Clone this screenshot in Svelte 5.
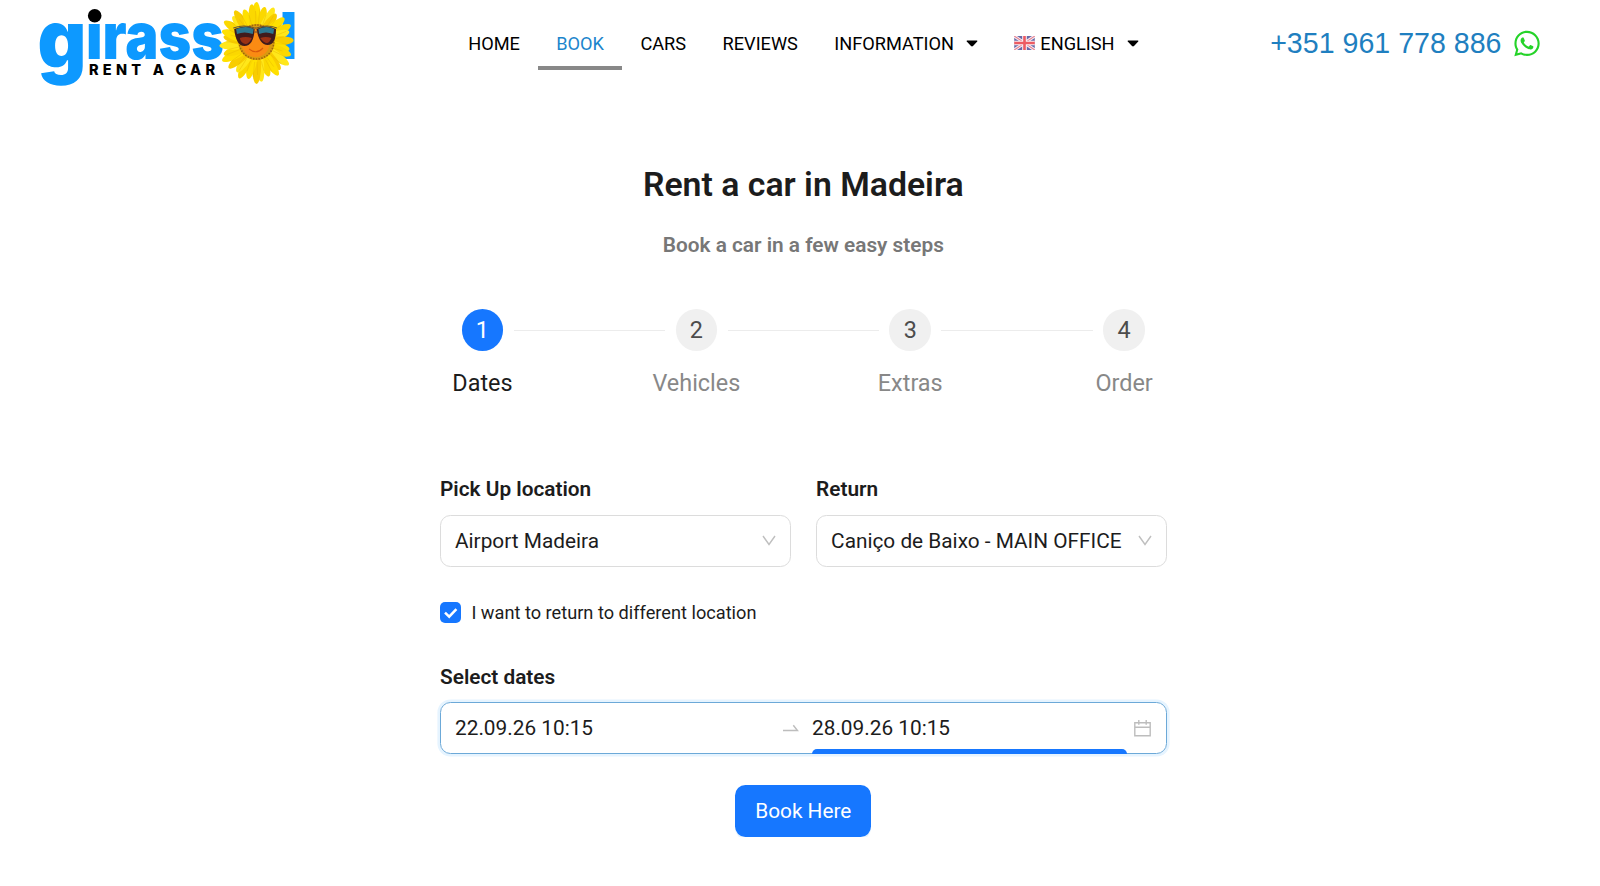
<script lang="ts">
  const links = ['HOME', 'BOOK', 'CARS', 'REVIEWS'];
  const steps = ['Dates', 'Vehicles', 'Extras', 'Order'];

  let currentStep = $state(0);
  let differentLocation = $state(true);

  const petals = Array.from({ length: 30 }, (_, i) => ({
    angle: i * 12 + (i % 3) * 2,
    length: [39, 35, 38, 34, 37][i % 5],
    fill: ['#ffe000', '#fbd800', '#ffe71a', '#f8cd00'][i % 4]
  }));
</script>

{#snippet caret()}
  <svg class="caret" viewBox="0 0 12 7"><path d="M1 .5h10q.8.3.2 1L7 6q-1 .8-2 0L.8 1.5Q.2.8 1 .5Z" /></svg>
{/snippet}

{#snippet chevron()}
  <svg class="chevron" viewBox="0 0 14 11"><path d="M1 1l6 8.5L13 1" /></svg>
{/snippet}

<header>
  <a class="logo" href="#home" aria-label="Girassol rent a car">
    <svg width="270" height="90" viewBox="0 0 270 90">
      <text class="brand" transform="translate(0 67.5) scale(1 1.25)" x="-.5" y="0" textLength="49" lengthAdjust="spacingAndGlyphs">g</text>
      <text class="brand" x="48" y="59" textLength="138" lengthAdjust="spacingAndGlyphs">irass</text>
      <text class="brand" x="241.5" y="59" textLength="18" lengthAdjust="spacingAndGlyphs">l</text>
      <rect x="48" y="6" width="17" height="16.5" fill="#fff" />
      <circle cx="56.7" cy="15.8" r="6.8" />
      <text class="tagline" x="51" y="75" textLength="126">RENT A CAR</text>
      <g transform="translate(218.5 43) scale(.93 1)">
        {#each petals as petal}
          <ellipse cx="0" cy={-petal.length / 2 - 2} rx="5" ry={petal.length / 2} fill={petal.fill} transform="rotate({petal.angle})" />
        {/each}
        {#each petals as petal}
          <path d="M0 -19V{5 - petal.length}" stroke="#e5b500" stroke-width=".4" transform="rotate({petal.angle + 6})" />
        {/each}
        <ellipse cy="-1" rx="19.5" ry="18" fill="#d99a10" />
        <ellipse cy="-1" rx="18.5" ry="17" fill="none" stroke="#9b670b" stroke-width="1.6" stroke-dasharray="1.5 1.5" />
        <ellipse cx="-1" cy="0" rx="15" ry="14" fill="#fa8b13" />
        <path d="M-8 6q8 6 15-1" fill="none" stroke="#d9590b" stroke-width="1.1" />
        <path d="M-24-14q13-5 22 0-1 17-11 17-9 0-11-17ZM0-14q11-5 21 0 0 16-9 16T0-14Z" fill="#401b1c" />
        <path d="M-22-14q11-4 19 0l-1 5q-9-3-17 0ZM2-14q9-4 17 0l-1 5q-8-3-15 0Z" fill="#2c7890" />
        <path d="M-18-5q6-2 13 0-3 6-7 6-5-1-6-6ZM4-5q6-2 12 0-2 5-5 5T4-5Z" fill="#9b3114" />
        <path d="M-25-15q12-4 23 0h2q11-4 22 0M-2-11h4" fill="none" stroke="#5a4a3a" stroke-width="1" />
      </g>
    </svg>
  </a>

  <nav>
    {#each links as link}
      <a class:active={link === 'BOOK'} href="#{link.toLowerCase()}">{link}</a>
    {/each}
    <a href="#information">INFORMATION {@render caret()}</a>
    <a href="#language">
      <svg class="flag" viewBox="0 0 22 15">
        <rect width="22" height="15" fill="#6768a6" />
        <path d="M0 0l22 15M22 0L0 15" stroke="#f5eef6" stroke-width="3.4" />
        <path d="M0 0l22 15M22 0L0 15" stroke="#e87f8b" stroke-width="1.1" />
        <path d="M11 0v15M0 7.5h22" stroke="#f9eff4" stroke-width="5" />
        <path d="M11 0v15M0 7.5h22" stroke="#ed5b62" stroke-width="2.8" />
      </svg>
      ENGLISH {@render caret()}
    </a>
  </nav>

  <a class="phone" href="tel:+351961778886">
    +351 961 778 886
    <svg class="whatsapp" viewBox="0 0 448 512">
      <path d="M380.9 97.1C339 55.1 283.2 32 223.9 32c-122.4 0-222 99.6-222 222 0 39.1 10.2 77.3 29.6 111L0 480l117.7-30.9c32.4 17.7 68.9 27 106.1 27h.1c122.3 0 224.1-99.6 224.1-222 0-59.3-25.2-115-67.1-157zm-157 341.6c-33.2 0-65.7-8.9-94-25.7l-6.700-4-69.800 18.3L72 359.2l-4.400-7c-18.500-29.400-28.200-63.300-28.200-98.200 0-101.700 82.800-184.500 184.600-184.500 49.300 0 95.600 19.200 130.400 54.100 34.800 34.900 56.200 81.200 56.100 130.500 0 101.800-84.900 184.600-186.600 184.600zm101.200-138.200c-5.500-2.800-32.800-16.200-37.900-18-5.100-1.900-8.800-2.800-12.500 2.800-3.700 5.600-14.300 18-17.600 21.800-3.200 3.700-6.500 4.200-12 1.400-32.600-16.300-54-29.100-75.500-66-5.700-9.800 5.700-9.100 16.300-30.300 1.800-3.700.9-6.900-.5-9.700-1.400-2.800-12.500-30.100-17.100-41.200-4.500-10.800-9.100-9.300-12.500-9.500-3.200-.2-6.900-.2-10.600-.2-3.700 0-9.700 1.400-14.800 6.900-5.100 5.600-19.400 19-19.400 46.300 0 27.300 19.900 53.700 22.600 57.400 2.800 3.700 39.100 59.700 94.800 83.800 35.200 15.200 49 16.500 66.600 13.900 10.700-1.600 32.800-13.400 37.400-26.400 4.600-13 4.600-24.100 3.200-26.400-1.300-2.500-5-3.900-10.500-6.600z" />
    </svg>
  </a>
</header>

<main>
  <h1>Rent a car in Madeira</h1>
  <h2>Book a car in a few easy steps</h2>

  <ol class="steps">
    {#each steps as step, i}
      <li class:current={i === currentStep}>
        <button type="button" onclick={() => (currentStep = i)}>{i + 1}</button>
        <span>{step}</span>
      </li>
    {/each}
  </ol>

  <div class="locations">
    <div class="field">
      <div class="label">Pick Up location</div>
      <div class="select">Airport Madeira {@render chevron()}</div>
    </div>
    <div class="field">
      <div class="label">Return</div>
      <div class="select">Caniço de Baixo - MAIN OFFICE {@render chevron()}</div>
    </div>
  </div>

  <label class="different">
    <input type="checkbox" bind:checked={differentLocation} />
    <span class="box">
      {#if differentLocation}
        <svg viewBox="0 0 21 21"><path d="M5 10.6l4.2 4.1 7.2-7.6" /></svg>
      {/if}
    </span>
    I want to return to different location
  </label>

  <div class="label">Select dates</div>
  <div class="picker">
    <span class="from">22.09.26 10:15</span>
    <svg class="arrow" viewBox="0 0 16 8"><path d="M0 6.5h14.5L10.3 1.2" /></svg>
    <span class="to">28.09.26 10:15</span>
    <svg class="calendar" viewBox="0 0 17 17"><path d="M.8 2.8h15.4v12.9H.8ZM.8 7.3h15.4M4.8 0v4.7M12.2 0v4.7" /></svg>
  </div>

  <button class="book" type="button">Book Here</button>
</main>

<style>
  :global(body) {
    background: #fff;
    color: #1c1c1c;
    font-family: Roboto, 'Liberation Sans', sans-serif;
  }

  a {
    color: inherit;
    text-decoration: none;
  }

  header {
    display: grid;
    grid-template-columns: 412px auto 1fr;
    height: 90px;
    padding: 0 60px 0 38px;
  }

  .logo svg {
    display: block;
    overflow: visible;
  }

  .brand {
    font: 900 65px Inter, sans-serif;
    fill: #0d99ff;
  }

  .tagline {
    font: 800 14.5px Inter, sans-serif;
    fill: #000;
  }

  nav {
    display: flex;
    height: 70px;
    color: #000;
    font-size: 18.2px;
  }

  nav a {
    display: flex;
    align-items: center;
    box-sizing: border-box;
    padding: 20.5px 18.2px 0;
    border-bottom: 4px solid transparent;
  }

  nav .active {
    color: #1c85cc;
    border-bottom-color: #888;
  }

  .caret {
    width: 12px;
    height: 7px;
    margin-left: 12px;
  }

  .flag {
    width: 21px;
    height: 14px;
    margin-right: 5px;
  }

  .phone {
    display: flex;
    justify-content: flex-end;
    align-items: center;
    height: 87px;
    color: #1f7fc0;
    font: 28.6px 'Liberation Sans', Arial, sans-serif;
  }

  .whatsapp {
    width: 26px;
    height: 29px;
    margin-left: 12.5px;
    fill: #25d329;
  }

  main {
    width: 726.6px;
    margin: 0 auto;
    padding-left: 6.6px;
  }

  h1 {
    margin: 74px 0 0;
    font-size: 33.8px;
    font-weight: 600;
    line-height: 42px;
    text-align: center;
  }

  h2 {
    margin: 26px 0 0;
    color: #777;
    font-size: 20.8px;
    font-weight: 600;
    line-height: 26px;
    text-align: center;
  }

  .steps {
    display: grid;
    grid-template-columns: repeat(4, 1fr);
    margin: 51px -64.5px 0;
    padding: 0;
    list-style: none;
    font-size: 23.4px;
  }

  .steps li {
    position: relative;
    display: flex;
    flex-direction: column;
    align-items: center;
    color: #888;
  }

  /* connector to the next step */
  .steps li:not(:last-child)::after {
    content: '';
    position: absolute;
    top: 21px;
    left: calc(50% + 31.2px);
    right: calc(-50% + 31.2px);
    height: 1.3px;
    background: #ececec;
  }

  .steps button {
    width: 41.6px;
    height: 41.6px;
    padding: 0;
    border: none;
    border-radius: 50%;
    background: #f0f0f0;
    color: #4c4c4c;
    font: inherit;
  }

  .steps .current {
    color: #1c1c1c;
  }

  .steps .current button {
    background: #1677ff;
    color: #fff;
  }

  .steps span {
    margin-top: 17px;
    line-height: 31px;
  }

  .locations {
    display: grid;
    grid-template-columns: 1fr 1fr;
    gap: 25.6px;
    margin-top: 77.6px;
  }

  .label {
    margin-bottom: 11.6px;
    font-size: 20.8px;
    font-weight: 600;
    line-height: 27px;
  }

  .select {
    display: flex;
    align-items: center;
    justify-content: space-between;
    box-sizing: border-box;
    height: 52px;
    padding: 0 14px;
    border: 1px solid #dcdcdc;
    border-radius: 10.4px;
    font-size: 20.8px;
    white-space: nowrap;
  }

  .chevron {
    width: 14px;
    height: 11px;
    fill: none;
    stroke: #bfbfbf;
    stroke-width: 1.4;
  }

  .different {
    display: flex;
    align-items: center;
    height: 26px;
    margin-top: 32.4px;
    font-size: 18.2px;
  }

  .different input {
    position: absolute;
    opacity: 0;
  }

  .box {
    width: 21px;
    height: 21px;
    margin-right: 10.4px;
    border-radius: 5px;
    background: #1677ff;
  }

  .box svg {
    display: block;
    fill: none;
    stroke: #fff;
    stroke-width: 2.5;
  }

  .different + .label {
    margin-top: 38.6px;
  }

  .picker {
    display: grid;
    grid-template-columns: 328px 29px 1fr 17px;
    align-items: center;
    box-sizing: border-box;
    height: 52px;
    padding: 0 15px 0 14px;
    border: 1px solid #6ca9d8;
    border-radius: 10.4px;
    box-shadow: 0 0 0 2.6px #e6f4ff;
    font-size: 20.8px;
  }

  .to {
    display: flex;
    align-items: center;
    position: relative;
    height: 50px;
    margin-right: 7px;
  }

  .to::after {
    content: '';
    position: absolute;
    inset: auto 0 -1px;
    height: 5px;
    border-radius: 5px 5px 0 0;
    background: #1677ff;
  }

  .arrow,
  .calendar {
    width: 16px;
    fill: none;
    stroke: #bdbdbd;
    stroke-width: 1.4;
  }

  .calendar {
    width: 17px;
  }

  .book {
    display: block;
    height: 52px;
    margin: 31px auto 0;
    padding: 0 20px;
    border: none;
    border-radius: 10.4px;
    background: #1677ff;
    box-shadow: 0 2px 0 rgba(5, 145, 255, 0.1);
    color: #fff;
    font: 20.8px Roboto, sans-serif;
  }
</style>
